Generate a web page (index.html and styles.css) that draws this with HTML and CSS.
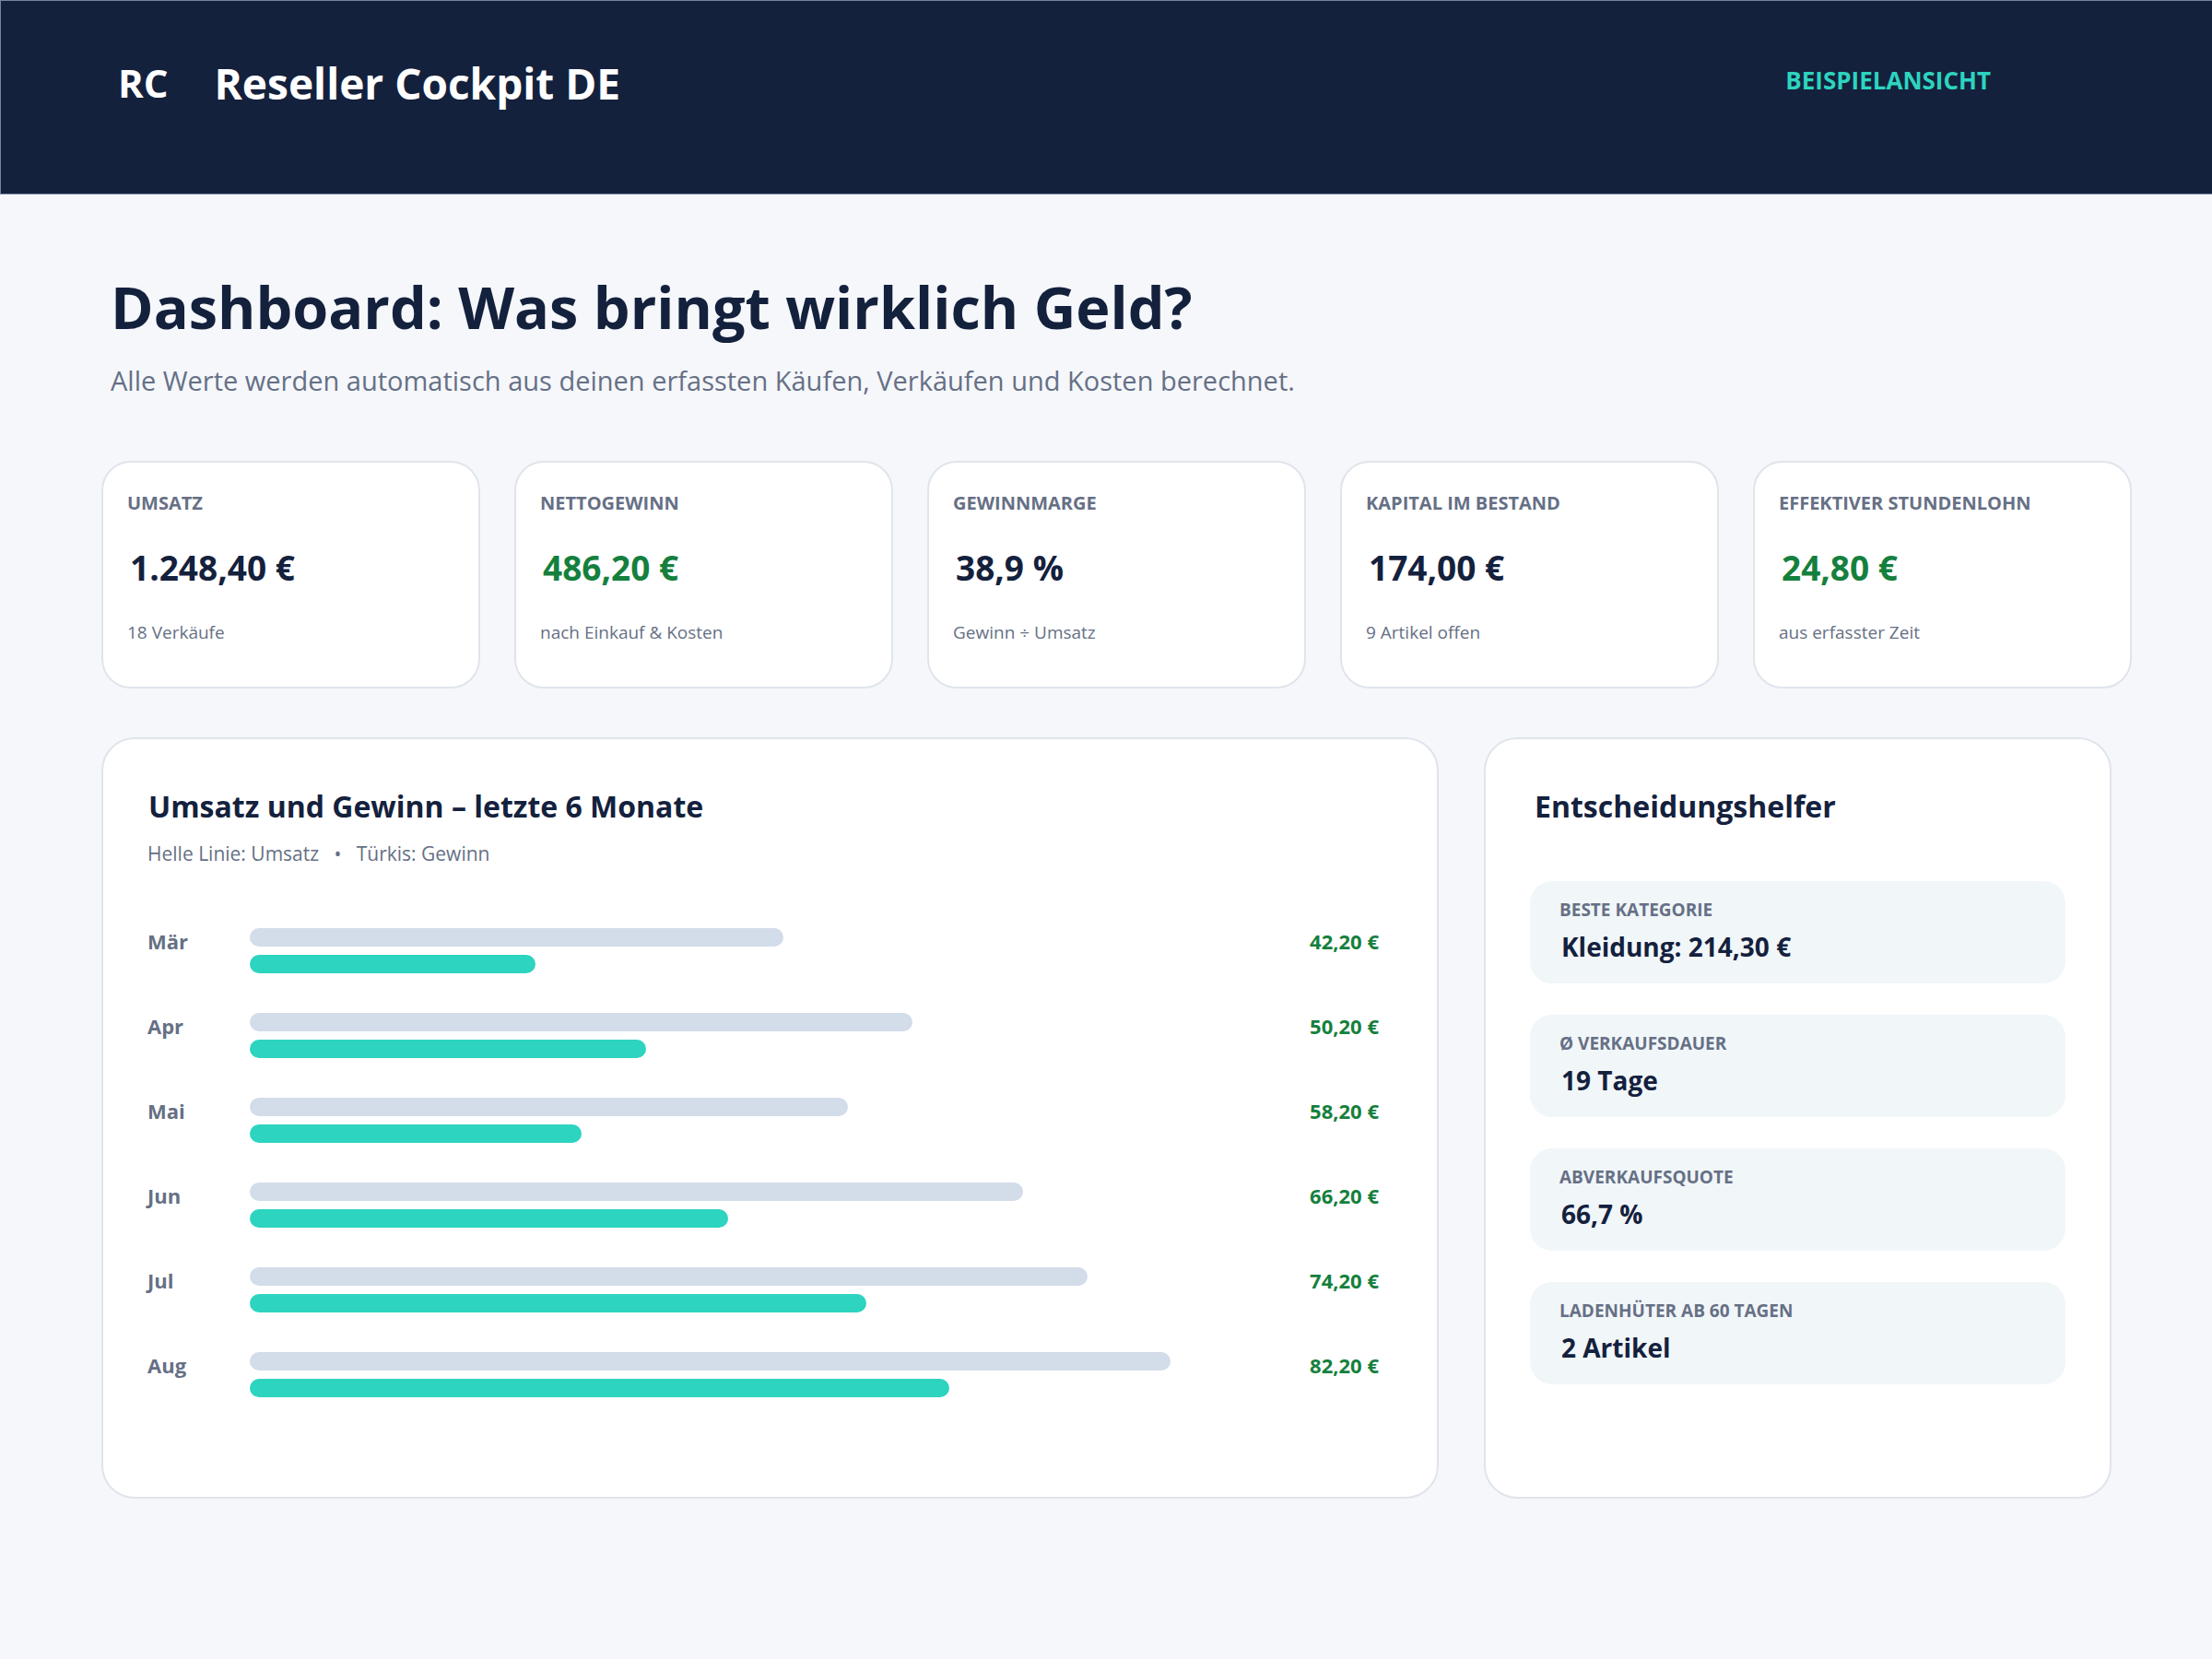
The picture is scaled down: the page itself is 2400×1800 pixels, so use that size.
FILE: index.html
```html
<!DOCTYPE html>
<html lang="de">
<head>
  <meta charset="utf-8">
  <meta name="viewport" content="width=device-width, initial-scale=1">
  <title>Reseller Cockpit DE</title>
  <link rel="stylesheet" href="styles.css">
</head>
<body>
  <header class="topbar">
    <div class="brand">
      <span class="brand-mark">RC</span>
      <span class="brand-name">Reseller Cockpit DE</span>
    </div>
    <span class="view-tag">BEISPIELANSICHT</span>
  </header>

  <main class="page">
    <h1 class="page-title">Dashboard: Was bringt wirklich Geld?</h1>
    <p class="page-lead">Alle Werte werden automatisch aus deinen erfassten Käufen, Verkäufen und Kosten berechnet.</p>

    <section class="kpis" aria-label="Kennzahlen">
      <article class="kpi">
        <h2 class="kpi-label">UMSATZ</h2>
        <p class="kpi-value">1.248,40 €</p>
        <p class="kpi-note">18 Verkäufe</p>
      </article>
      <article class="kpi">
        <h2 class="kpi-label">NETTOGEWINN</h2>
        <p class="kpi-value positive">486,20 €</p>
        <p class="kpi-note">nach Einkauf &amp; Kosten</p>
      </article>
      <article class="kpi">
        <h2 class="kpi-label">GEWINNMARGE</h2>
        <p class="kpi-value">38,9 %</p>
        <p class="kpi-note">Gewinn ÷ Umsatz</p>
      </article>
      <article class="kpi">
        <h2 class="kpi-label">KAPITAL IM BESTAND</h2>
        <p class="kpi-value">174,00 €</p>
        <p class="kpi-note">9 Artikel offen</p>
      </article>
      <article class="kpi">
        <h2 class="kpi-label">EFFEKTIVER STUNDENLOHN</h2>
        <p class="kpi-value positive">24,80 €</p>
        <p class="kpi-note">aus erfasster Zeit</p>
      </article>
    </section>

    <div class="panels">
      <section class="panel panel-chart">
        <h2 class="panel-title">Umsatz und Gewinn – letzte 6 Monate</h2>
        <p class="panel-legend">Helle Linie: Umsatz &nbsp; • &nbsp; Türkis: Gewinn</p>
        <ul class="months">
          <li class="month">
            <span class="month-name">Mär</span>
            <div class="bars"><div class="bar" style="width:58%"></div><div class="bar profit" style="width:31%"></div></div>
            <span class="month-value">42,20 €</span>
          </li>
          <li class="month">
            <span class="month-name">Apr</span>
            <div class="bars"><div class="bar" style="width:72%"></div><div class="bar profit" style="width:43%"></div></div>
            <span class="month-value">50,20 €</span>
          </li>
          <li class="month">
            <span class="month-name">Mai</span>
            <div class="bars"><div class="bar" style="width:65%"></div><div class="bar profit" style="width:36%"></div></div>
            <span class="month-value">58,20 €</span>
          </li>
          <li class="month">
            <span class="month-name">Jun</span>
            <div class="bars"><div class="bar" style="width:84%"></div><div class="bar profit" style="width:52%"></div></div>
            <span class="month-value">66,20 €</span>
          </li>
          <li class="month">
            <span class="month-name">Jul</span>
            <div class="bars"><div class="bar" style="width:91%"></div><div class="bar profit" style="width:67%"></div></div>
            <span class="month-value">74,20 €</span>
          </li>
          <li class="month">
            <span class="month-name">Aug</span>
            <div class="bars"><div class="bar" style="width:100%"></div><div class="bar profit" style="width:76%"></div></div>
            <span class="month-value">82,20 €</span>
          </li>
        </ul>
      </section>

      <section class="panel panel-facts">
        <h2 class="panel-title">Entscheidungshelfer</h2>
        <dl class="facts">
          <div class="fact"><dt class="fact-label">BESTE KATEGORIE</dt><dd class="fact-value">Kleidung: 214,30 €</dd></div>
          <div class="fact"><dt class="fact-label">Ø VERKAUFSDAUER</dt><dd class="fact-value">19 Tage</dd></div>
          <div class="fact"><dt class="fact-label">ABVERKAUFSQUOTE</dt><dd class="fact-value">66,7 %</dd></div>
          <div class="fact"><dt class="fact-label">LADENHÜTER AB 60 TAGEN</dt><dd class="fact-value">2 Artikel</dd></div>
        </dl>
      </section>
    </div>
  </main>
</body>
</html>
```
FILE: styles.css
```css
:root {
  --navy: #14213d;
  --muted: #667085;
  --green: #15803d;
  --teal: #2dd4bf;
  --line: #e0e4eb;
}

* {
  box-sizing: border-box;
}

body {
  margin: 0;
  background: #f5f7fb;
  color: var(--navy);
  font-family: "Open Sans", "Noto Sans", sans-serif;
}

h1, h2, p, ul, dl, dd {
  margin: 0;
  padding: 0;
}

/* Header */
.topbar {
  display: flex;
  justify-content: space-between;
  align-items: flex-start;
  padding: 57px 240px 88px 127px;
  border: 1px solid #75839b;
  border-right: 0;
  background: var(--navy);
  color: #fff;
  font-weight: 700;
}

.brand {
  display: flex;
  align-items: center;
  gap: 50px;
  line-height: 64px;
}

.brand-mark {
  font-size: 42px;
}

.brand-name {
  font-size: 46px;
}

.view-tag {
  color: var(--teal);
  font-size: 26px;
  line-height: 58px;
}

/* Page */
.page {
  padding: 77px 87px 100px 110px;
}

.page-title {
  padding-left: 10px;
  font-size: 63px;
  line-height: 90px;
}

.page-lead {
  margin-top: 13px;
  padding-left: 10px;
  color: var(--muted);
  font-size: 29px;
  line-height: 44px;
}

/* Key figures */
.kpis {
  display: grid;
  grid-template-columns: repeat(5, 1fr);
  gap: 37px;
  margin-top: 65px;
}

.kpi {
  padding: 30px 26px 45px;
  border: 2px solid var(--line);
  border-radius: 32px;
  background: #fff;
}

.kpi-label {
  color: var(--muted);
  font-size: 20px;
  line-height: 28px;
}

.kpi-value {
  margin-top: 32px;
  padding-left: 3px;
  font-size: 37px;
  font-weight: 700;
  line-height: 48px;
}

.positive {
  color: var(--green);
}

.kpi-note {
  margin-top: 32px;
  color: var(--muted);
  font-size: 19px;
  line-height: 28px;
}

/* Panels */
.panels {
  display: grid;
  grid-template-columns: 1451fr 681fr;
  gap: 49px;
  margin: 53px 22px 0 0;
}

.panel {
  padding: 49px 48px 48px;
  border: 2px solid var(--line);
  border-radius: 36px;
  background: #fff;
}

.panel-chart {
  padding-right: 63px;
  padding-bottom: 108px;
}

.panel-title {
  padding-left: 1px;
  font-size: 32px;
  line-height: 48px;
}

.panel-facts .panel-title {
  padding-left: 5px;
}

.panel-legend {
  margin-top: 11px;
  color: var(--muted);
  font-size: 21px;
  line-height: 32px;
}

.months {
  display: grid;
  gap: 43px;
  margin-top: 65px;
  list-style: none;
}

.month {
  display: grid;
  grid-template-columns: 111px 1fr 226px;
  align-items: start;
  font-weight: 700;
  line-height: 28px;
}

.month-name {
  color: var(--muted);
  font-size: 22px;
}

.month-value {
  color: var(--green);
  font-size: 22px;
  text-align: right;
}

.bars {
  display: grid;
  gap: 9px;
}

.bar {
  height: 20px;
  border-radius: 10px;
  background: #d3dce9;
}

.bar.profit {
  background: var(--teal);
}

.facts {
  display: grid;
  gap: 34px;
  margin-top: 57px;
}

.fact {
  padding: 19px 32px 20px;
  border-radius: 24px;
  background: #f1f6f9;
}

.fact-label {
  color: var(--muted);
  font-size: 19px;
  font-weight: 700;
  line-height: 24px;
}

.fact-value {
  margin-top: 8px;
  padding-left: 2px;
  font-size: 28px;
  font-weight: 700;
  line-height: 40px;
}
```
